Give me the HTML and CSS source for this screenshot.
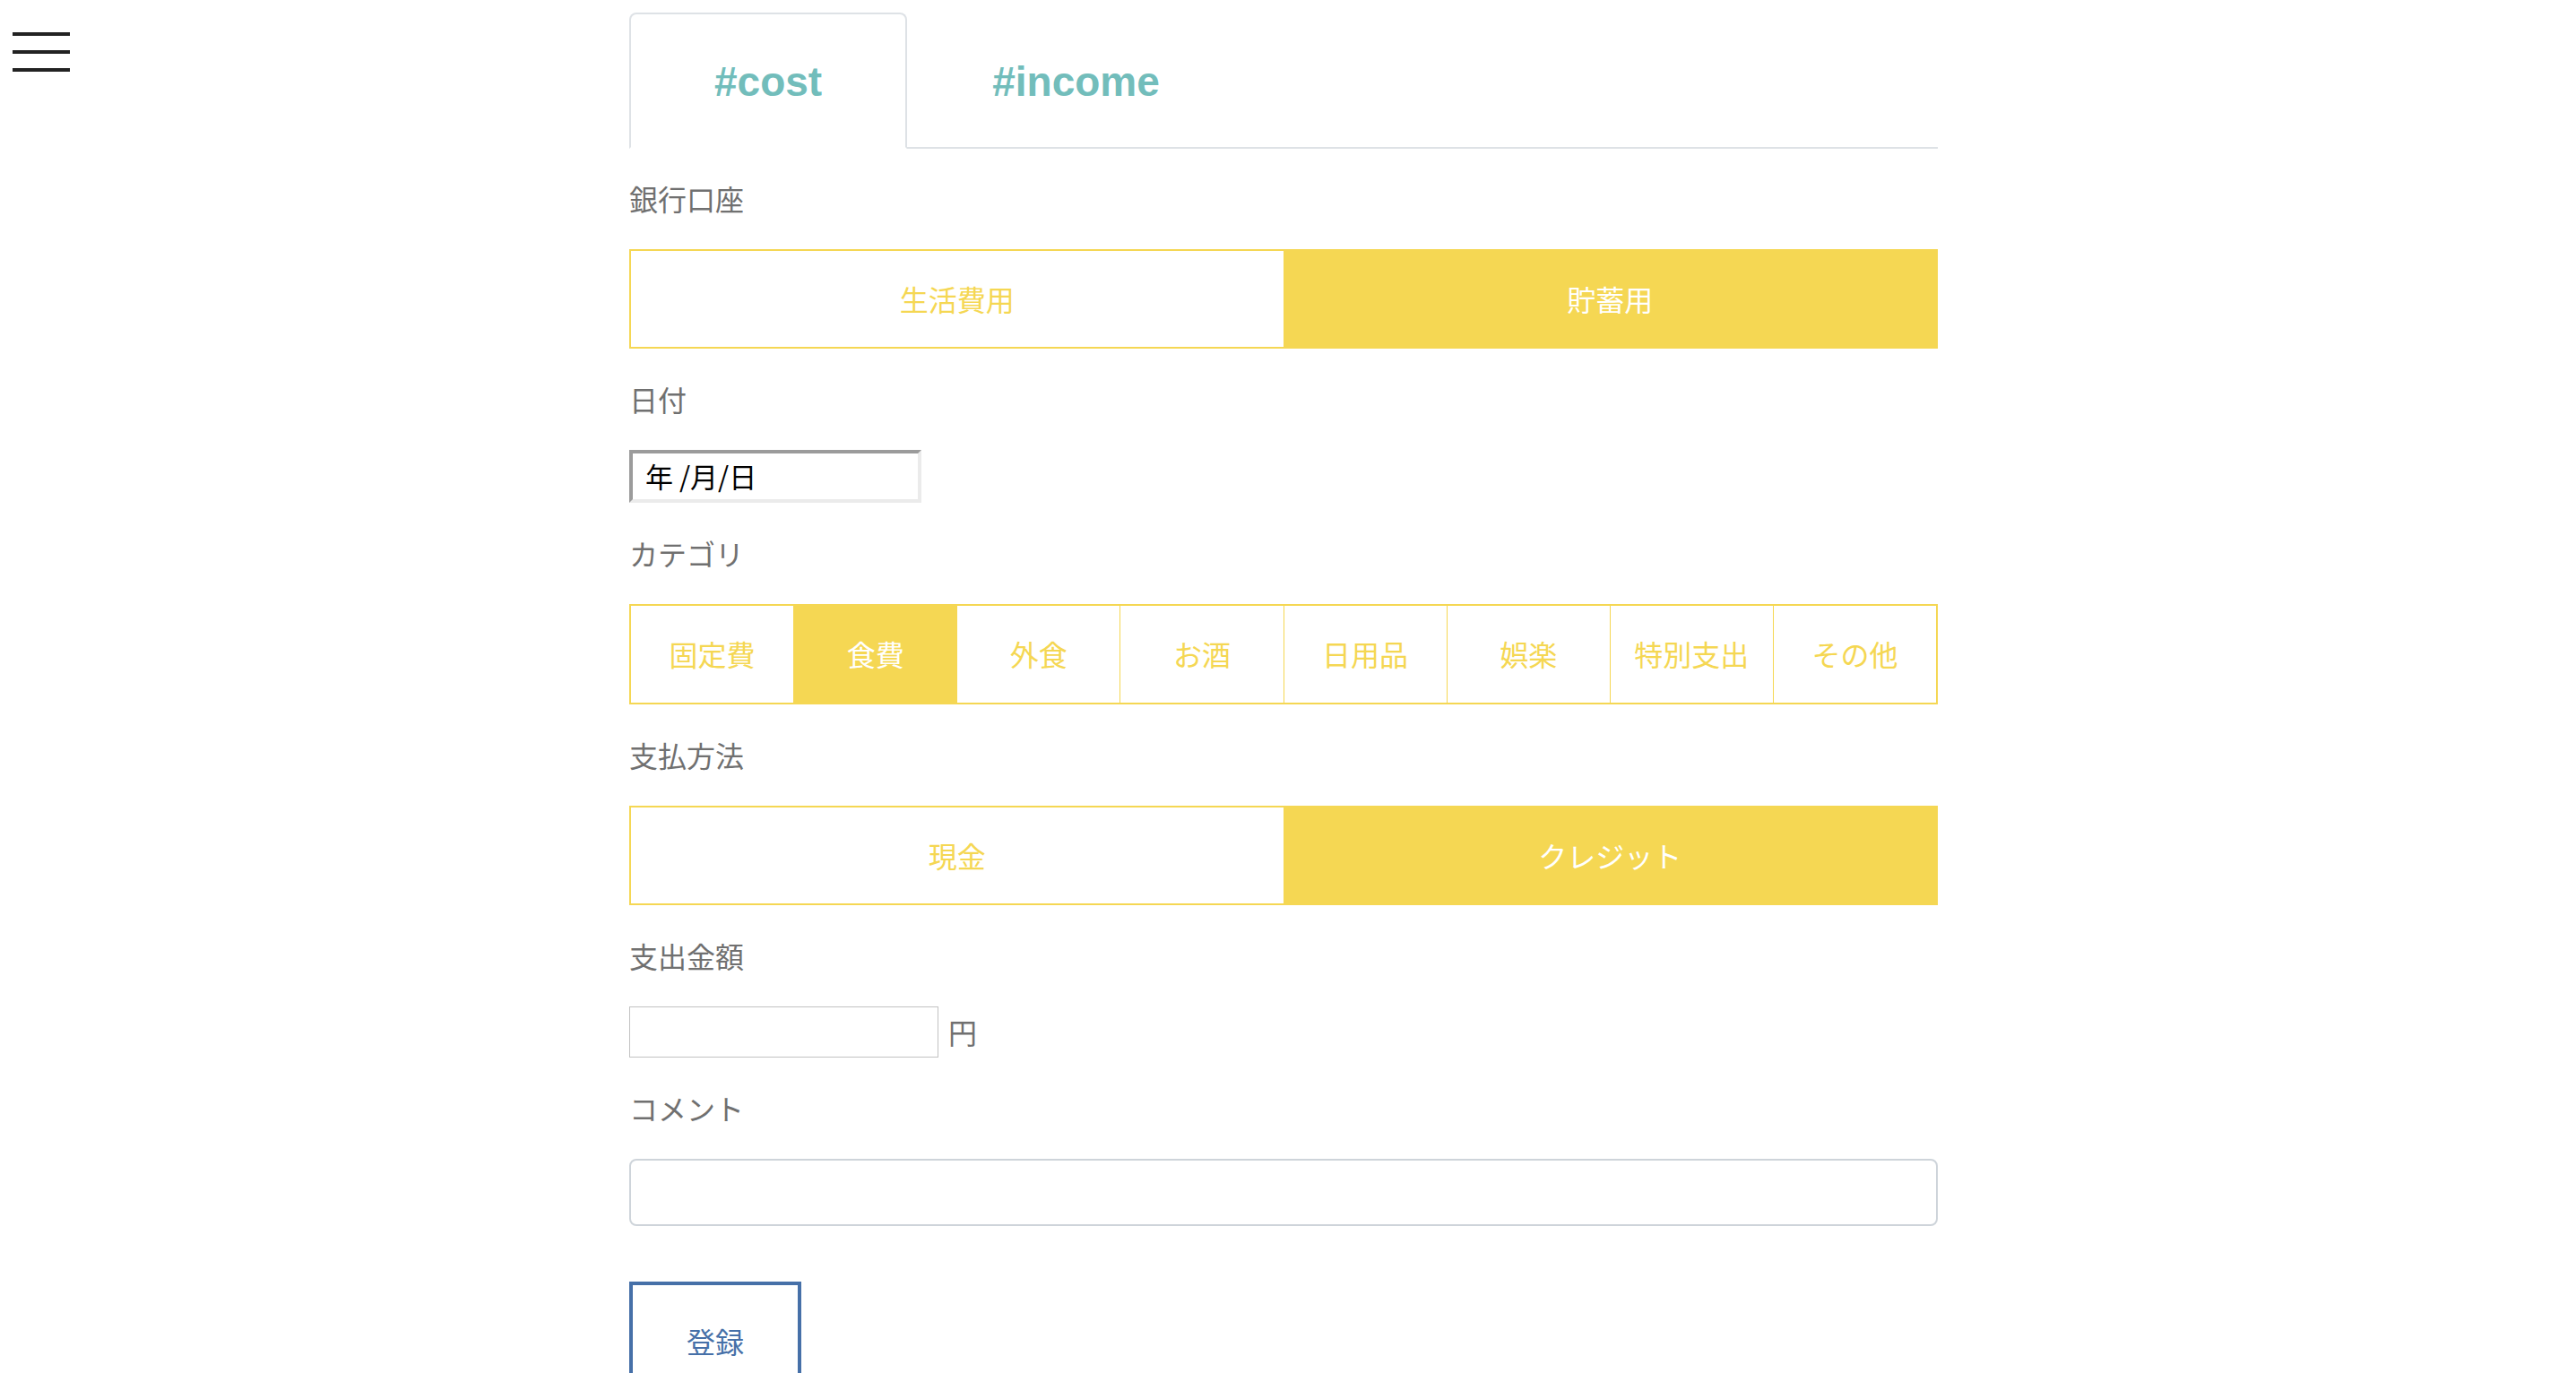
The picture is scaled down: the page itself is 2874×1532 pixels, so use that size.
FILE: index.html
```html
<!DOCTYPE html>
<html lang="ja">
<head>
<meta charset="utf-8">
<title>家計簿</title>
<link rel="stylesheet" href="styles.css">
</head>
<body>
<div class="page">
  <aside class="side">
    <button class="menu-toggle" type="button" aria-label="menu">
      <span class="bar"></span>
      <span class="bar"></span>
      <span class="bar"></span>
    </button>
  </aside>
  <main class="main">
    <nav class="tabs">
      <a class="tab active" href="#cost">#cost</a>
      <a class="tab" href="#income">#income</a>
    </nav>
    <form class="form">
      <div class="label">銀行口座</div>
      <div class="seg">
        <div class="seg-item">生活費用</div>
        <div class="seg-item active">貯蓄用</div>
      </div>

      <div class="label">日付</div>
      <div class="row">
        <input class="date-input" type="text" value="年 /月/日" readonly>
      </div>

      <div class="label">カテゴリ</div>
      <div class="seg seg-cat">
        <div class="seg-item">固定費</div>
        <div class="seg-item active">食費</div>
        <div class="seg-item">外食</div>
        <div class="seg-item">お酒</div>
        <div class="seg-item">日用品</div>
        <div class="seg-item">娯楽</div>
        <div class="seg-item">特別支出</div>
        <div class="seg-item">その他</div>
      </div>

      <div class="label">支払方法</div>
      <div class="seg">
        <div class="seg-item">現金</div>
        <div class="seg-item active">クレジット</div>
      </div>

      <div class="label">支出金額</div>
      <div class="row">
        <input class="amount-input" type="text">
        <span class="unit">円</span>
      </div>

      <div class="label">コメント</div>
      <input class="comment-input" type="text">

      <div class="row submit-row">
        <button class="submit" type="button">登録</button>
      </div>
    </form>
  </main>
  <div class="spacer"></div>
</div>
</body>
</html>
```

FILE: styles.css
```css
html {
  scrollbar-width: none;
}
html::-webkit-scrollbar {
  display: none;
}
body {
  margin: 0;
  background: #fff;
  font-family: "Noto Sans CJK JP", "Noto Sans", sans-serif;
}
.page {
  display: grid;
  grid-template-columns: 1fr 1460px 1fr;
  padding: 14px 10px 0 0;
}
.side {
  padding: 22px 0 0 14px;
}
.menu-toggle {
  display: flex;
  flex-direction: column;
  gap: 16px;
  padding: 0;
  margin: 0;
  border: 0;
  background: transparent;
}
.bar {
  display: block;
  width: 64px;
  height: 4px;
  background: #222;
}
.tabs {
  display: flex;
  border-bottom: 2px solid #dee2e6;
}
.tab {
  display: block;
  padding: 47px 93px 45px;
  line-height: 56px;
  font-family: "Liberation Sans", Arial, sans-serif;
  font-weight: 700;
  font-size: 46px;
  color: #72bdbb;
  text-decoration: none;
  border: 2px solid transparent;
  border-radius: 8px 8px 0 0;
  margin-bottom: -2px;
}
.tab.active {
  border-color: #dee2e6 #dee2e6 #fff;
  background: #fff;
}
.form {
  display: flex;
  flex-direction: column;
  gap: 33px;
  margin: 32px 0 0;
}
.label {
  font-size: 32px;
  line-height: 47px;
  color: #707070;
}
.seg {
  display: flex;
  height: 111px;
  box-sizing: border-box;
  border: 2px solid #f5d753;
}
.seg-cat {
  height: 112px;
}
.seg-item {
  flex: 1;
  display: flex;
  align-items: center;
  justify-content: center;
  padding-bottom: 2px;
  font-size: 32px;
  color: #f5d753;
  border-left: 1px solid #f5d753;
}
.seg-item:first-child {
  border-left: 0;
}
.seg-item.active {
  background: #f5d753;
  color: #fff;
}
.row {
  display: flex;
  align-items: center;
}
.date-input {
  box-sizing: border-box;
  width: 326px;
  height: 59px;
  margin: 0;
  padding: 0 14px 2px;
  border: 4px solid;
  border-color: #9b9b9b #ebebeb #ebebeb #9b9b9b;
  font-family: "Noto Sans CJK JP", sans-serif;
  font-size: 31px;
  color: #000;
  background: #fff;
  outline: none;
}
.amount-input {
  box-sizing: border-box;
  width: 345px;
  height: 57px;
  margin: 0;
  border: 1px solid #c2c2c2;
  background: #fff;
  outline: none;
}
.unit {
  margin-left: 11px;
  padding-bottom: 2px;
  font-size: 32px;
  color: #707070;
}
.comment-input {
  box-sizing: border-box;
  width: 100%;
  height: 75px;
  margin: 0;
  border: 2px solid #ced4da;
  border-radius: 8px;
  background: #fff;
  outline: none;
}
.submit-row {
  margin-top: 29px;
}
.submit {
  box-sizing: border-box;
  width: 192px;
  padding: 38px 0 40px;
  margin: 0;
  border: 4px solid #4670a8;
  background: #fff;
  font-family: "Noto Sans CJK JP", sans-serif;
  font-size: 32px;
  line-height: 48px;
  color: #4670a8;
}
```
